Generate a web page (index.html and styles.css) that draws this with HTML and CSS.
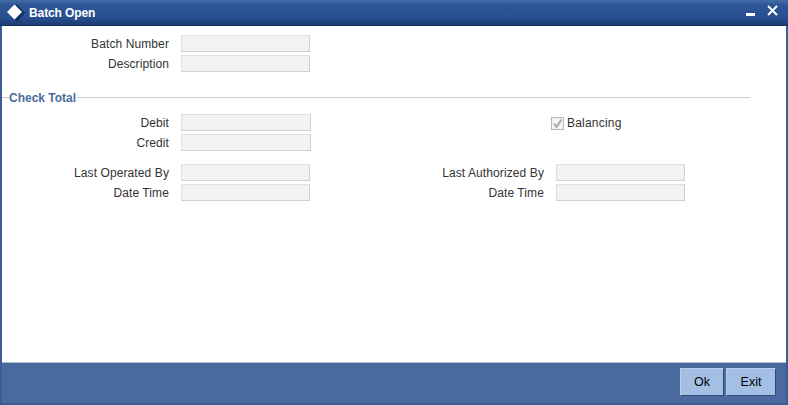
FILE: index.html
```html
<!DOCTYPE html>
<html lang="en">
<head>
    <meta charset="UTF-8">
    <title>Batch Open</title>
    <link rel="stylesheet" href="styles.css">
</head>
<body>
    <div class="window">
        <div class="titlebar">
            <svg class="logo" width="18" height="18" viewBox="0 0 18 18">
                <path d="M10 0.5 L18 9 L10 17.5 L2 9 Z" fill="#12305f"/>
                <path d="M7.5 0.5 L15 8 L7.5 15.5 L0 8 Z" fill="#ffffff"/>
            </svg>
            <span class="title">Batch Open</span>
            <svg class="win-btn" width="34" height="16" viewBox="0 0 34 16">
                <rect x="1" y="8" width="9" height="3" fill="#ffffff"/>
                <path d="M23 1 L32 10 M32 1 L23 10" stroke="#ffffff" stroke-width="2" fill="none"/>
            </svg>
        </div>

        <div class="content">
            <div class="row row-first">
                <label class="lbl">Batch Number</label>
                <input class="field" type="text" disabled>
            </div>
            <div class="row">
                <label class="lbl">Description</label>
                <input class="field" type="text" disabled>
            </div>

            <div class="legend">
                <span class="legend-text">Check Total</span>
            </div>

            <div class="check-rows">
                <div class="col-left">
                    <div class="row">
                        <label class="lbl">Debit</label>
                        <input class="field field-wide" type="text" disabled>
                    </div>
                    <div class="row">
                        <label class="lbl">Credit</label>
                        <input class="field field-wide" type="text" disabled>
                    </div>
                </div>
                <div class="balancing">
                    <span class="checkbox">
                        <svg width="13" height="13" viewBox="0 0 13 13">
                            <path d="M3 6.5 L5.5 10 L10.5 2.5" stroke="#a9a9a9" stroke-width="2" fill="none"/>
                        </svg>
                    </span>
                    <span class="lbl-plain">Balancing</span>
                </div>
            </div>

            <div class="audit">
                <div class="col-left">
                    <div class="row">
                        <label class="lbl">Last Operated By</label>
                        <input class="field" type="text" disabled>
                    </div>
                    <div class="row">
                        <label class="lbl">Date Time</label>
                        <input class="field" type="text" disabled>
                    </div>
                </div>
                <div class="col-right">
                    <div class="row">
                        <label class="lbl lbl-right">Last Authorized By</label>
                        <input class="field" type="text" disabled>
                    </div>
                    <div class="row">
                        <label class="lbl lbl-right">Date Time</label>
                        <input class="field" type="text" disabled>
                    </div>
                </div>
            </div>
        </div>

        <div class="footer">
            <button class="btn">Ok</button>
            <button class="btn">Exit</button>
        </div>
    </div>
</body>
</html>
```
FILE: styles.css
```css
* {
    box-sizing: border-box;
}

body {
    margin: 0;
    padding: 0;
    height: 405px;
    overflow: hidden;
    font-family: "Liberation Sans", Arial, sans-serif;
    font-size: 12px;
    color: #333333;
}

.window {
    width: 788px;
    height: 405px;
    display: flex;
    flex-direction: column;
    background: #3a5d96;
    padding: 0 2px 2px 2px;
}

.titlebar {
    height: 26px;
    margin: 0 -2px;
    padding: 0 9px 0 7px;
    display: flex;
    align-items: center;
    color: #ffffff;
    background: linear-gradient(to bottom, #456da7, #2d5597 20%, #284f90 70%, #1c3c74);
    border-bottom: 1px solid #16315f;
}

.logo {
    margin-right: 4px;
}

.title {
    flex: 1;
    font-weight: bold;
    letter-spacing: -0.1px;
}

.content {
    flex: 1;
    background: #ffffff;
    padding-top: 9px;
}

.row {
    display: flex;
    align-items: center;
    height: 18px;
    margin-bottom: 2px;
}

.lbl {
    width: 168px;
    padding-right: 1px;
    margin-right: 11px;
    text-align: right;
    letter-spacing: 0.1px;
}

.lbl-right {
    width: 172px;
}

.lbl-plain {
    margin-left: 3px;
    letter-spacing: 0.2px;
}

.field {
    width: 129px;
    height: 17px;
    margin: 0;
    align-self: flex-start;
    background: #f2f2f2;
    border: 1px solid #e0e0e0;
    border-bottom-color: #d0d0d0;
    border-right-color: #d0d0d0;
}

.field-wide {
    width: 130px;
}

.legend {
    margin: 14px 36px 0 0;
    height: 21px;
    display: flex;
    align-items: center;
    border: 0;
    background: linear-gradient(#c5d0dc, #c5d0dc) 0 10px / 100% 1px no-repeat;
}

.legend-text {
    margin-left: 7px;
    padding-right: 1px;
    background: #ffffff;
    color: #4a6d9c;
    font-weight: bold;
}

.check-rows {
    display: flex;
    margin-top: 6px;
}

.col-left {
    width: 372px;
}

.balancing {
    display: flex;
    align-items: center;
    height: 18px;
    margin-left: 177px;
}

.checkbox {
    width: 13px;
    height: 13px;
    border: 1px solid #b5b5b5;
    background: #f4f4f4;
    display: flex;
}

.checkbox svg {
    margin: -1px;
    flex: none;
}

.audit {
    display: flex;
    margin-top: 10px;
}

.col-right {
    margin-left: -1px;
}

.footer {
    height: 41px;
    margin-top: 0;
    padding: 5px 10px 0 0;
    display: flex;
    justify-content: flex-end;
    gap: 2px;
    background: #4a6a9f;
    border-top: 1px solid #a9bcd8;
}

.btn {
    width: 44px;
    height: 28px;
    margin: 0;
    padding: 0;
    font-family: "Liberation Sans", Arial, sans-serif;
    font-size: 12.5px;
    font-weight: normal;
    color: #000000;
    background: #a3bfe4;
    border: 1px solid;
    border-color: #b9cfec #2f4a78 #2f4a78 #b9cfec;
}

.btn + .btn {
    width: 50px;
}
```
